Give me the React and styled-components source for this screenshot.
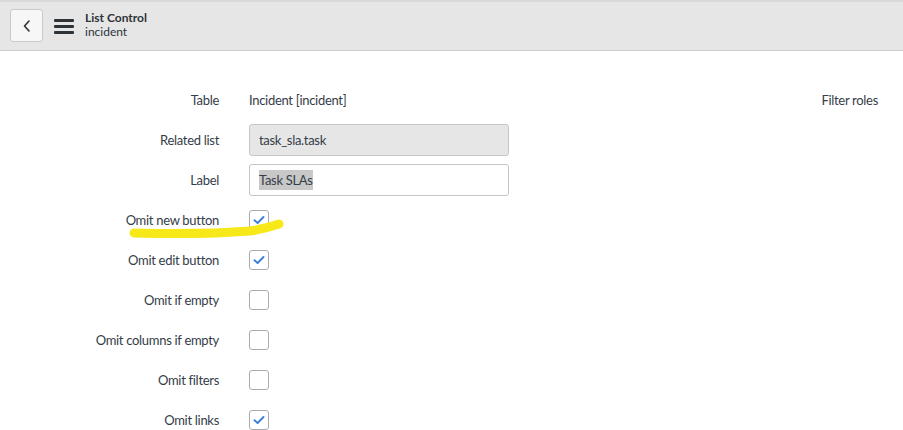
import React from "react";
import styled, { createGlobalStyle } from "styled-components";

const Global = createGlobalStyle`
  html, body { margin: 0; padding: 0; background: #fff; }
  body { font-family: "Lato", "Open Sans", sans-serif; color: #343d47; overflow: hidden; }
  * { box-sizing: border-box; }
`;

const Header = styled.header`
  height: 51px;
  background: #e6e6e6;
  border-top: 2px solid #d9d9d9;
  border-bottom: 1px solid #cdcdcd;
  display: flex;
  align-items: center;
  padding-left: 10px;
`;

const BackButton = styled.button`
  width: 33px;
  height: 33px;
  border: 1px solid #c9c9c9;
  border-radius: 3px;
  background: #f7f7f7;
  display: flex;
  align-items: center;
  justify-content: center;
  padding: 0;
  margin-top: -1px;
`;

const Burger = styled.div`
  width: 20px;
  margin-left: 11px;
  display: flex;
  flex-direction: column;
  gap: 3px;
  span { display: block; height: 3px; background: #2e3338; border-radius: 1px; }
`;

const Titles = styled.div`
  margin-left: 11px;
  display: flex;
  flex-direction: column;
  font-size: 12px;
  line-height: 14px;
  color: #2e3338;
  margin-top: -3px;
`;

const Title = styled.div`
  font-weight: ${p => (p.$bold ? 700 : 400)};
`;

const Content = styled.main`
  position: relative;
  padding: 29px 25px 0 0;
`;

const Row = styled.div`
  display: grid;
  grid-template-columns: 219px 260px 1fr;
  column-gap: 30px;
  align-items: center;
  height: 40px;
  font-size: 13px;
  letter-spacing: -0.3px;
`;

const Label = styled.div`
  text-align: right;
  color: #343d47;
`;

const Value = styled.div`
  color: #343d47;
`;

const Aside = styled.div`
  text-align: right;
  color: #343d47;
`;

const Input = styled.div`
  height: 32px;
  border: 1px solid #c6c6c6;
  border-radius: 3px;
  background: ${p => (p.$readonly ? "#e6e6e6" : "#fff")};
  display: flex;
  align-items: center;
  padding-left: 9px;
  color: #343d47;
`;

const Selected = styled.span`
  background: #c8c8c8;
  padding: 2px 0;
`;

const Box = styled.div`
  width: 20px;
  height: 20px;
  border: 1px solid #a9adb2;
  border-radius: 3px;
  background: #fff;
  display: flex;
  align-items: center;
  justify-content: center;
`;

const Highlight = styled.svg`
  position: absolute;
  left: 125px;
  top: 161px;
  pointer-events: none;
`;

const Check = ({ on }) => (
  <Box>
    {on && (
      <svg width="14" height="14" viewBox="0 0 14 14">
        <path d="M2.5 7.2 L5.6 10 L11.5 4" fill="none" stroke="#3a7fd9" strokeWidth="1.9" strokeLinecap="round" strokeLinejoin="round" />
      </svg>
    )}
  </Box>
);

const checks = [
  ["Omit new button", true],
  ["Omit edit button", true],
  ["Omit if empty", false],
  ["Omit columns if empty", false],
  ["Omit filters", false],
  ["Omit links", true],
];

export default function App() {
  return (
    <>
      <Global />
      <Header>
        <BackButton aria-label="Back">
          <svg width="10" height="14" viewBox="0 0 10 14">
            <path d="M7 2 L2.5 7 L7 12" fill="none" stroke="#2e3338" strokeWidth="1.6" strokeLinecap="round" strokeLinejoin="round" />
          </svg>
        </BackButton>
        <Burger><span /><span /><span /></Burger>
        <Titles>
          <Title $bold>List Control</Title>
          <Title>incident</Title>
        </Titles>
      </Header>
      <Content>
        <Row>
          <Label>Table</Label>
          <Value>Incident [incident]</Value>
          <Aside>Filter roles</Aside>
        </Row>
        <Row>
          <Label>Related list</Label>
          <Input $readonly>task_sla.task</Input>
        </Row>
        <Row>
          <Label>Label</Label>
          <Input><Selected>Task SLAs</Selected></Input>
        </Row>
        {checks.map(([l, on]) => (
          <Row key={l}>
            <Label>{l}</Label>
            <div><Check on={on} /></div>
          </Row>
        ))}
        <Highlight width="165" height="30" viewBox="0 0 165 30">
          <path d="M9 21 C50 22, 100 21, 125 19 C140 17, 148 14, 154 12" fill="none" stroke="#f7e81a" strokeWidth="9" strokeLinecap="round" />
        </Highlight>
      </Content>
    </>
  );
}
